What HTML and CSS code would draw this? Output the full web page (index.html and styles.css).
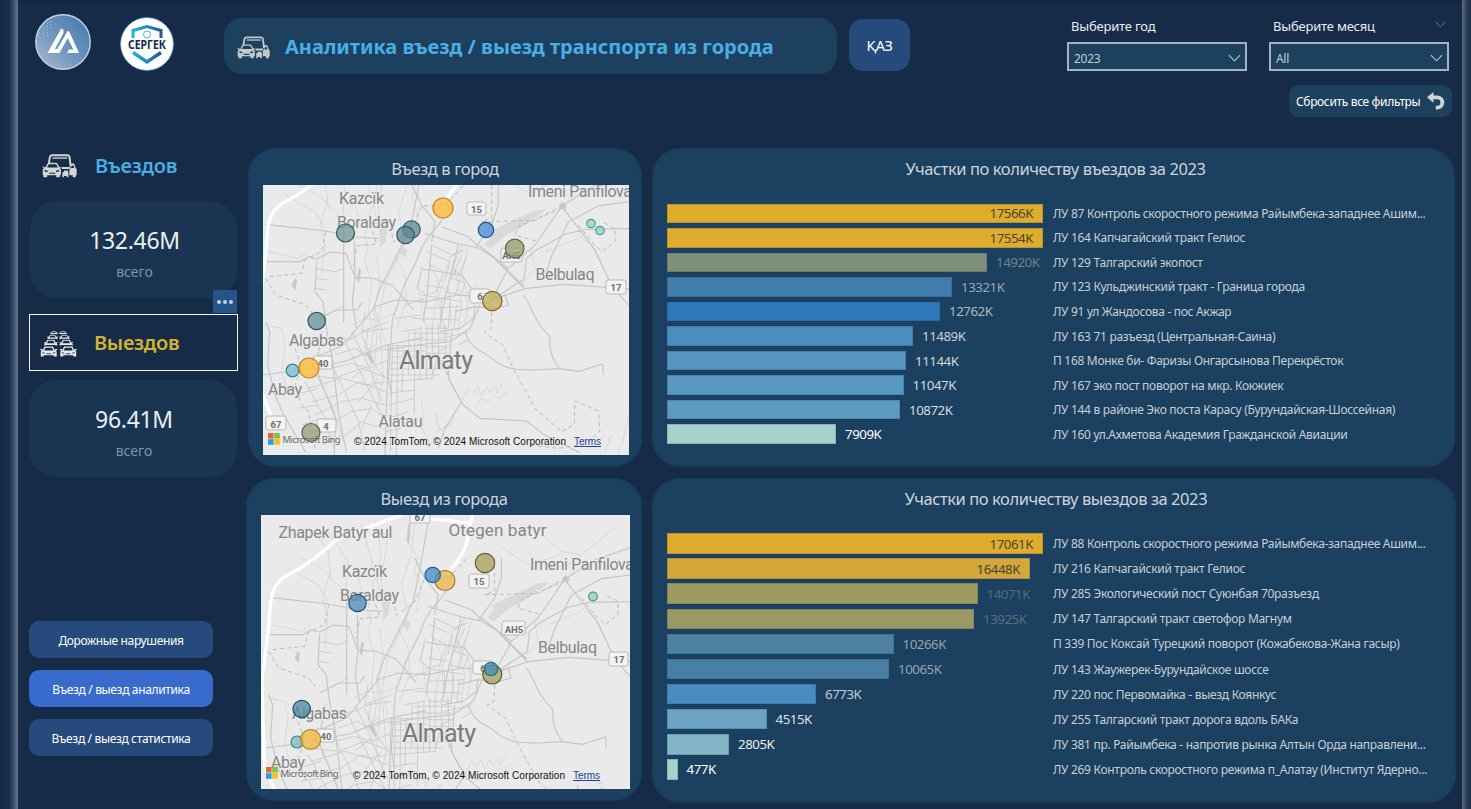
FILE: index.html
```html
<!DOCTYPE html>
<html lang="ru">
<head>
<meta charset="utf-8">
<title>Аналитика въезд / выезд</title>
<link rel="stylesheet" href="styles.css">
</head>
<body>
<svg class="defs" width="0" height="0" aria-hidden="true">
  <defs>
    <symbol id="traffic" viewBox="0 0 34 24">
      <path d="M6.600 9.300 7.600 3.200Q8 1 10 1h14.500q2 0 2.300 2.200L27.800 12M19 13.500h8" fill="none" stroke="currentColor" stroke-width="1.900"/>
      <path d="M10 3.800h14.500" stroke="currentColor" stroke-width="1.300"/>
      <path d="M3.800 13.800 5.600 10q.5-1 1.500-1h6q1 0 1.600 1l1.900 3.800" fill="none" stroke="currentColor" stroke-width="1.400"/>
      <path fill-rule="evenodd" d="M0 12.200h2.400l.4.800h13.900l.4-.8h1.400l-.9 1.500.8 1.500v5.300h-1.200v2h-3.400v-2H5v2H1.500v-2H.7v-5.300l1-1.700zM2.600 15.200v1.600l3 .6v-1.200zm14 0-3 1v1.200l3-.6zM7 18v1.100h5.800V18z" fill="currentColor"/>
      <path fill-rule="evenodd" d="M27 9.200h4.200l1.400 4 1.100 1.500v5.800h-.9v2h-2.900v-2h-3.300v-5.200l1.200-2zM28.300 11v2.500h3L30.500 11z" fill="currentColor"/>
      <path fill-rule="evenodd" d="M19.800 17.500h1l.8-1.700h3.300l.8 1.700v5h-1.500v-1.200h-2.900v1.200h-1.500z" fill="currentColor"/>
    </symbol>
    <symbol id="car-front" viewBox="0 0 17 10">
      <path d="M3.200 4.500 4.800 .8h7.400l1.600 3.700" fill="none" stroke="currentColor" stroke-width="1.300"/>
      <path d="M0 2.600h2.600v1.500H.8zM17 2.600h-2.600v1.500h1.800zM2 4h13l1.200 1.300v4.500h-2.800V8.600H3.600v1.200H.8V5.300z" fill="currentColor"/>
      <path d="M2.200 6.100l2.400.5M14.800 6.100l-2.400.5M6.200 7.200h4.600" stroke="#152b47" stroke-width=".8"/>
    </symbol>
    <symbol id="car-roof" viewBox="0 0 17 8">
      <path d="M3.200 4.700 4.800 .8h7.400l1.600 3.900" fill="none" stroke="currentColor" stroke-width="1.400"/>
      <path d="M0 3h2.800l.4 1.200h10.600l.4-1.200H17l-1.500 1.500.7 1v1.400l-3.400-.7H4.200l-3.400.7V5.500l.7-1z" fill="currentColor"/>
    </symbol>
    <symbol id="chevron" viewBox="0 0 14 8"><path d="M1 1l6 6 6-6" fill="none" stroke="currentColor" stroke-width="1.100"/></symbol>
    <symbol id="mslogo" viewBox="0 0 12 12">
      <path d="M0 0h5.600v5.600H0z" fill="#e8673a"/><path d="M6.200 0h5.600v5.600H6.200z" fill="#82bf3c"/>
      <path d="M0 6.200h5.600v5.600H0z" fill="#1ba2e8"/><path d="M6.200 6.200h5.600v5.600H6.200z" fill="#fbbc1b"/>
    </symbol>
    <g id="basemap" fill="none" stroke-linejoin="round">
      <g fill="#d9d9d9">
        <path d="M730 262 870 196l35-2-70 50-55 28-42 38-20-10 22-25zM405 245l22 5-5 40-18 18zM460 320l14-16 14 12-8 22z"/>
      </g>
      <g fill="#c9c9c9">
        <path d="M360 625l14-8 12 30-4 12zM340 370l8 5-6 40-6-10zM480 20l8-10-4 70-8-8zM148 400l8 5-4 30-12-12zM943 178l12-6 10 12-8 14z"/>
      </g>
      <g stroke="#d6d6d6" stroke-width="2.800">
        <path d="M160 120l60 30 60 60 20 60M240 40l60 90-8 100M340 20l30 100 10 60-20 90M420 60l-20 120 5 90M250 150l-25 90 15 60-10 90M190 30l50 70 10 90M500 10l-10 100-30 90 20 90-60 130M470 60l40 60-10 40 20 50-15 70M120 150l90 50 30 50M380 10l20 90-15 80 20 80"/>
        <path d="M355 270l15 30-10 50 20 60-10 90 15 60-10 60M395 330l10 80-15 70 10 80M420 420l-20 100 20 70M330 180l20 70M450 330l30 60 5 80-30 80M60 540l50 10 10 50M70 320l90 20 30-20M540 540l-20-120 10-60M560 560l20-150-30-60M600 560l-20-100 30-110M620 540l-10-120 30-100M640 560l10-90-25-110 25-60M660 540l10-80-20-80 20-70"/>
        <path d="M300 480l-60 30M320 540l40-20 40 5 50-20M120 600l-10 80 20 60M1000 270l40 30 30 60M700 420l-40 30 10 40M900 320l100-40M1100 30l-150 120M860 30l80 70 60 10M860 310l10 60-40 50M750 80l90 60 100-30M480 840l50 10 30 50M600 870l-30-40 10-30M530 760l5 80M405 560l10 140-20 90M385 480l10 100-10 130"/>
        <path d="M650 770l20-40 18 14 10-20 12 28 16-28 8 18 18-20 4 22 16-30M690 790l20-30 20 10 20-20 10 12 30-24M570 800l14 50-8 8 40-20 14-24M1155 800l-22 90-15 35M1100 870l-20 50"/>
      </g>
      <g stroke="#c5c5c5" stroke-width="3.400">
        <path d="M62 238l180 20 90 18 70 4M65 350h100l25-15 25 8 40-22 48 4 27 72 52 2 62 24 60 70M296 240v290M328 290l2 108-8 72 12 80M54 690l90-12 160-30 120-48 110-22M215 525l60-30 60 0 15-22M62 530l12 30-6 100 22 90 22 52 70 120M215 350l-5 90 24 30 12 90 16 80 18 160 24 120M232 560l-20 110 60 150-4 110"/>
        <path d="M541 10l-25 140-20 100-90 180-20 60-90 110-96 42M596 215c-20 40-60 60-80 130l-40 80-34 100-12 170 10 60M500 120l30 60 40 50-10 60M540 265l60 20 42 12 60 12 46 30 88 84M700 305l-30-30-80-30M690 310l50-70 20-60 0-60M640 298l-40 160-15 80M560 300l-16 170-10 60"/>
        <path d="M740 465l50-95 80-70 80-116 90-58 115-40M740 465l98-64 6-60 30-26 88-48 60-14 133-2M740 465l100-34 120-13 195 14M838 431l-85-86M950 184l100 130 50 110 56 62M1155 170l-95 12-90 50-50 100-15 46M740 465l-40-10-60-5-100 20-90-5-60 20M790 370l-90-70M740 465l40-15 10 30-40 10-60-5-60 15M690 480l-5 40-40 30-60 10"/>
        <path d="M835 450c25 30 30 80 80 125-6 45 12 75 28 96l60 8 70-22 2 32M660 560c20 60 60 60 80 80 40 35 80 35 130 35l73-4M590 640l30 80 35 60 50 40 140 8 50 40 110 55M620 560l-10 140 40 70-50 80-20 60M705 480l-30 70-60 40-100 10-95 15M680 430l-30-40-120-18M430 600l-10 330"/>
      </g>
      <g stroke="#c9c9c9" stroke-width="2.700">
        <path d="M440 602h100M440 618h100M438 636h130M436 654h110M434 672h180M434 690h150M442 600l-6 320M458 600l-4 330M475 600l-4 140M492 560l-2 130M510 555l-2 250M528 545l-2 160M545 540v160M562 540v150M580 540l2 110M600 540l4 150M500 565h110M500 585h110M540 550h70M540 605h70M540 625h70M434 710l130-10M430 745l80-10M430 780l80-20M430 820l60-20M420 860l50-10M410 900l50-5"/>
        <path d="M270 630l60-20 30 20 60-20M260 670l60-15 50 15 60-25M180 690l90 10 80-30 80 30M190 730l100-30 70 20 60-10M200 770l80-20 60-40 80 30M210 810l80-40 60-10 70 20M230 850l90-50 60-10 40 30M290 880l60-50 60 20M290 570l50 100 60 120 30 60M320 560l50 100 40 110M350 570l40 90 30 40M250 640l50 100 40 90 20 90M220 700l40 80 40 120M180 710l60 110 30 100M370 550l-10 60M300 590l60-30 70-10M330 640l60-40M360 500l-10 60 80-30M320 700l50-40M380 780l-30 70M400 700l-60 70M150 750l70-20M160 790l60-10M170 840l60-20M230 900l60-30M340 900l60-30M250 600l60-20"/>
        <path d="M530 380l-15 50 30 20 30-10 20-60-40-20M560 300l60 30 40-15M545 320l70 30-15 60M620 370l30 20-20 60M610 340l40-25M650 330l-30 70M665 335l-30 70M620 400l40 15-10 30M540 420l60 10M530 450l120 20M540 490l110-5M500 520l140 5M470 560l60-10M600 440l50 10M210 370l60 10 30-10M210 400l40 5M208 430l35 5M560 700l20-80 40-20M590 580l80-20M640 600l30-15M570 660l50-10M480 480l60-20M450 520l80-10M590 460l-5 90M615 470l-5 80M635 480l-8 70"/>
      </g>
      <g stroke="#b5b5b5" stroke-width="2.700" stroke-dasharray="13 9">
        <path d="M655 122l-55 60-70 0-30 70-55 40-10-60-60 5 20 60-60 5-10 60M242 260l-12 60-50 25-10 40-100 10M62 400l30 50 90 30 20 25M740 120v100l-30 10 160-4 80-44M950 190l-130 55-10 25 70 20M740 500l-2 50-20 12 55 38 32 70 65 120 80 70 38-22 2-70 70 30 5 60-45 40-80 12-90-10M1000 240l40 50 30 30 40-30 0-40-40-20M150 610l20 60-20 50 20 60 20 20 20 110"/>
      </g>
      <path d="M461-9 271 61c-40 35-90 80-160 115-40 25-45 65-48 145L41 491l8 249 32 80M541 1l130 15M673-9l-12 60c-8 60-45 90-65 120" stroke="#fff" stroke-width="10"/>
    </g>
    <linearGradient id="sky" x1="1" y1="0" x2="0" y2="1"><stop offset="0" stop-color="#3f74ab"/><stop offset=".55" stop-color="#7398bd"/><stop offset="1" stop-color="#a6bdd4"/></linearGradient>
    <linearGradient id="shield" x1="0" x2="1"><stop offset="0" stop-color="#1fb5dc"/><stop offset="1" stop-color="#1e5c9c"/></linearGradient>
  </defs>
</svg>

<div class="app">
  <div class="rail rail-left"></div>
  <main class="page">
    <header class="top">
      <svg class="logo-a" viewBox="0 0 56 56">
        <circle cx="28" cy="28" r="27.200" fill="url(#sky)" stroke="#c3d0e2" stroke-width="1.400"/>
        <path d="M4.500 22v-6M8.500 23v-12M12.500 22V8M16 14V6" stroke="#a9c2dc" stroke-width="1" stroke-dasharray="1 2"/>
        <path d="M12.500 39 26.200 14.500l2.300 1.300v3.200L19.800 35h2.600l10-17.800h1.700L44 39H32.200l1.600-3.500h4.600l-5.700-11.300L24.400 39z" fill="#fff"/>
      </svg>
      <svg class="logo-s" viewBox="0 0 54 54">
        <circle cx="27" cy="27" r="26.300" fill="#fff" stroke="#8cc4e4" stroke-width=".8"/>
        <path d="M13 21V13.500L27 9.500l14 4V21" fill="none" stroke="url(#shield)" stroke-width="3"/>
        <circle cx="27" cy="17.500" r="3.500" fill="none" stroke="#3ca5cd" stroke-width=".9"/>
        <path d="M13 35.500 27 45l14-9.500" fill="none" stroke="url(#shield)" stroke-width="3.400"/>
        <text x="27" y="31.500" text-anchor="middle" class="sergek" textLength="38" lengthAdjust="spacingAndGlyphs">СЕРГЕК</text>
      </svg>
      <div class="title-bar">
        <svg class="icon-title"><use href="#traffic"/></svg>
        <h1>Аналитика въезд / выезд транспорта из города</h1>
      </div>
      <button class="lang">ҚАЗ</button>
      <div class="filters">
        <div class="selects">
          <div class="field"><span class="field-label">Выберите год</span><div class="select"><span>2023</span><svg><use href="#chevron"/></svg></div></div>
          <div class="field"><span class="field-label">Выберите месяц<svg><use href="#chevron"/></svg></span><div class="select"><span>All</span><svg><use href="#chevron"/></svg></div></div>
        </div>
        <button class="reset"><span>Сбросить все фильтры</span>
          <svg viewBox="0 0 18 18"><path d="M6.500 0v3.400h3.700a6.900 6.900 0 0 1 0 14.200H8.800v-3.800h1.300a3.300 3.300 0 0 0 0-6.600H6.500v3.600L0 5.300z" fill="currentColor"/></svg>
        </button>
      </div>
    </header>

    <div class="content">
      <aside class="side">
        <div class="kpi-head in"><svg class="kpi-icon"><use href="#traffic"/></svg><span>Въездов</span></div>
        <div class="kpi"><b>132.46M</b><span>всего</span></div>
        <div class="kpi-head out">
          <svg class="jam" viewBox="0 0 37 26">
            <use href="#car-roof" x="10" y="0" width="8" height="4"/><use href="#car-roof" x="19" y="0" width="8" height="4"/>
            <use href="#car-roof" x="7" y="3.500" width="11" height="5.500"/><use href="#car-roof" x="19" y="3.500" width="11" height="5.500"/>
            <use href="#car-roof" x="3.500" y="8.500" width="14.500" height="7"/><use href="#car-roof" x="19" y="8.500" width="14.500" height="7"/>
            <use href="#car-front" x="0" y="15" width="17.500" height="11"/><use href="#car-front" x="19.500" y="15" width="17.500" height="11"/>
          </svg>
          <span>Выездов</span>
          <i class="more"><i></i><i></i><i></i></i>
        </div>
        <div class="kpi second"><b>96.41M</b><span>всего</span></div>
        <nav class="nav">
          <a>Дорожные нарушения</a>
          <a class="active">Въезд / выезд аналитика</a>
          <a>Въезд / выезд статистика</a>
        </nav>
      </aside>

      <section class="panel map-panel">
        <h2>Въезд в город</h2>
        <svg class="map" width="366" height="270">
          <use href="#basemap" transform="translate(-18 -40) scale(.33333)"/>
          <g class="shields">
            <rect x="204" y="17" width="19" height="13"/><text x="213.500" y="28">15</text>
            <rect x="238" y="63" width="21" height="14"/><text x="248.500" y="74">AH5</text>
            <rect x="343" y="95" width="20" height="14"/><text x="353" y="106">17</text>
            <rect x="207" y="104" width="20" height="14"/><text x="217" y="115">6</text>
            <rect x="50" y="171" width="19" height="13"/><text x="60" y="182">40</text>
            <rect x="3" y="231" width="20" height="14"/><text x="13" y="243">67</text>
            <rect x="54" y="234" width="19" height="13"/><text x="63" y="245">4</text>
          </g>
          <g class="places">
            <text x="76" y="18.500" textLength="45">Kazcïk</text>
            <text x="74" y="43" textLength="59">Boralday</text>
            <text x="265" y="12" textLength="104">Imeni Panfilova</text>
            <text x="272.500" y="95" textLength="59">Belbulaq</text>
            <text x="26" y="160.500" textLength="55">Algabas</text>
            <text x="5" y="210" textLength="34">Abay</text>
            <text x="115.500" y="242" textLength="44">Alatau</text>
            <text class="city" x="136" y="183.500" textLength="74">Almaty</text>
          </g>
          <g class="dots">
            <circle cx="180" cy="23" r="10" fill="#fcb72c" stroke="#c4831c"/>
            <circle cx="148.500" cy="44.500" r="8.700" fill="#5b8a90" stroke="#2f5965"/>
            <circle cx="142.500" cy="50" r="8.700" fill="#5b8a90" stroke="#2f5965"/>
            <circle cx="82.500" cy="48" r="9" fill="#6f9694" stroke="#31555a"/>
            <circle cx="223" cy="45" r="7.700" fill="#3f8bcf" stroke="#18529b"/>
            <circle cx="251.700" cy="63.500" r="9.300" fill="#929d68" stroke="#5c643d"/>
            <circle cx="328" cy="38.500" r="4.200" fill="#8dd6cb" stroke="#4a9f98"/>
            <circle cx="337" cy="45.500" r="4.200" fill="#8dd6cb" stroke="#4a9f98"/>
            <circle cx="229.300" cy="116" r="9.700" fill="#c0aa58" stroke="#7e6b25"/>
            <circle cx="53.700" cy="136" r="8.700" fill="#618f98" stroke="#2b5661"/>
            <circle cx="29.500" cy="185.500" r="6.300" fill="#70c0d0" stroke="#38818f"/>
            <circle cx="46" cy="183" r="10" fill="#fcb72c" stroke="#c4831c"/>
            <circle cx="48" cy="247.500" r="9" fill="#929d78" stroke="#59613d"/>
          </g>
          <use href="#mslogo" x="5" y="248" width="12" height="12"/>
          <text class="bing" x="19.500" y="257.500" textLength="58">Microsoft Bing</text>
          <text class="copy" x="91" y="260" textLength="212">© 2024 TomTom, © 2024 Microsoft Corporation</text>
          <text class="copy terms" x="311" y="260" textLength="27">Terms</text>
        </svg>
      </section>

      <section class="panel chart-panel">
        <h2>Участки по количеству въездов за 2023</h2>
        <div class="chart upper">
          <div class="row"><div class="track"><i class="bar" style="width:376px;background:#e0ac2c"></i><em class="inside">17566K</em></div><span>ЛУ 87 Контроль скоростного режима Райымбека-западнее Ашим...</span></div>
          <div class="row"><div class="track"><i class="bar" style="width:376px;background:#e0ac2c"></i><em class="inside">17554K</em></div><span>ЛУ 164 Капчагайский тракт Гелиос</span></div>
          <div class="row"><div class="track"><i class="bar" style="width:320px;background:#7e9079"></i><em style="color:#70808c">14920K</em></div><span>ЛУ 129 Талгарский экопост</span></div>
          <div class="row"><div class="track"><i class="bar" style="width:285px;background:#417dab"></i><em style="color:#9aa7b2">13321K</em></div><span>ЛУ 123 Кульджинский тракт - Граница города</span></div>
          <div class="row"><div class="track"><i class="bar" style="width:273px;background:#2d77bb"></i><em style="color:#adb8c1">12762K</em></div><span>ЛУ 91 ул Жандосова - пос Акжар</span></div>
          <div class="row"><div class="track"><i class="bar" style="width:246px;background:#4a8ebf"></i><em style="color:#c9d1d8">11489K</em></div><span>ЛУ 163 71 разъезд (Центральная-Саина)</span></div>
          <div class="row"><div class="track"><i class="bar" style="width:239px;background:#5595c0"></i><em style="color:#d1d8de">11144K</em></div><span>П 168 Монке би- Фаризы Онгарсынова Перекрёсток</span></div>
          <div class="row"><div class="track"><i class="bar" style="width:236.500px;background:#5797c1"></i><em style="color:#d3dadf">11047K</em></div><span>ЛУ 167 эко пост поворот на мкр. Кокжиек</span></div>
          <div class="row"><div class="track"><i class="bar" style="width:233px;background:#5c9ac1"></i><em style="color:#d7dde2">10872K</em></div><span>ЛУ 144 в районе Эко поста Карасу (Бурундайская-Шоссейная)</span></div>
          <div class="row"><div class="track"><i class="bar" style="width:169px;background:#a5d3cc"></i><em style="color:#fff">7909K</em></div><span>ЛУ 160 ул.Ахметова Академия Гражданской Авиации</span></div>
        </div>
      </section>

      <section class="panel map-panel low">
        <h2>Выезд из города</h2>
        <svg class="map" width="369" height="274">
          <use href="#basemap" transform="translate(-13 3) scale(.33333)"/>
          <g class="shields">
            <rect x="149" y="-5" width="20" height="13"/><text x="159" y="6">67</text>
            <rect x="208" y="59" width="20" height="14"/><text x="218" y="70">15</text>
            <rect x="241" y="106" width="23" height="14"/><text x="253" y="117.500">AH5</text>
            <rect x="348" y="137" width="19" height="14"/><text x="358" y="148">17</text>
            <rect x="212" y="146" width="20" height="13"/><text x="222" y="157">6</text>
            <rect x="55" y="214" width="18" height="13"/><text x="65" y="225">40</text>
          </g>
          <g class="places">
            <text x="17.500" y="23" textLength="114">Zhapek Batyr aul</text>
            <text class="wide" x="187.500" y="20.500" textLength="98">Otegen batyr</text>
            <text x="81" y="61.500" textLength="45">Kazcïk</text>
            <text x="79" y="86" textLength="59">Boralday</text>
            <text x="269" y="54.500" textLength="104">Imeni Panfilova</text>
            <text x="277" y="138" textLength="59">Belbulaq</text>
            <text x="31" y="203.500" textLength="55">Algabas</text>
            <text x="10" y="253" textLength="34">Abay</text>
            <text class="city" x="141" y="226.500" textLength="74">Almaty</text>
          </g>
          <g class="dots">
            <circle cx="184" cy="65.500" r="10" fill="#ebb243" stroke="#a77c25"/>
            <circle cx="171.700" cy="60" r="7.700" fill="#3e8bca" stroke="#22588d"/>
            <circle cx="224" cy="48" r="9.700" fill="#a59e55" stroke="#666031"/>
            <circle cx="96.500" cy="88" r="8.700" fill="#4b86ae" stroke="#1f5584"/>
            <circle cx="332" cy="81.500" r="4.300" fill="#8dd0c3" stroke="#4e8f86"/>
            <circle cx="231.300" cy="159.500" r="9.500" fill="#a59e60" stroke="#5e5b31"/>
            <circle cx="230" cy="154" r="6.700" fill="#3f91b2" stroke="#286b87"/>
            <circle cx="40.700" cy="194" r="8.700" fill="#4d85a0" stroke="#1e5067"/>
            <circle cx="36" cy="227" r="6" fill="#7abac1" stroke="#3d8792"/>
            <circle cx="49.700" cy="224.500" r="10" fill="#f0b537" stroke="#b58527"/>
          </g>
          <use href="#mslogo" x="5" y="252" width="12" height="12"/>
          <text class="bing" x="19.500" y="261.500" textLength="58">Microsoft Bing</text>
          <text class="copy" x="92" y="264" textLength="212">© 2024 TomTom, © 2024 Microsoft Corporation</text>
          <text class="copy terms" x="312" y="264" textLength="27">Terms</text>
        </svg>
      </section>

      <section class="panel chart-panel low">
        <h2>Участки по количеству выездов за 2023</h2>
        <div class="chart lower">
          <div class="row"><div class="track"><i class="bar" style="width:376px;background:#e0ac2c"></i><em class="inside">17061K</em></div><span>ЛУ 88 Контроль скоростного режима Райымбека-западнее Ашим...</span></div>
          <div class="row"><div class="track"><i class="bar" style="width:363px;background:#d3a739"></i><em class="inside">16448K</em></div><span>ЛУ 216 Капчагайский тракт Гелиос</span></div>
          <div class="row"><div class="track"><i class="bar" style="width:310.500px;background:#9f9a62"></i><em style="color:#566b7c">14071K</em></div><span>ЛУ 285 Экологический пост Суюнбая 70разъезд</span></div>
          <div class="row"><div class="track"><i class="bar" style="width:307px;background:#9c9863"></i><em style="color:#596e7f">13925K</em></div><span>ЛУ 147 Талгарский тракт светофор Магнум</span></div>
          <div class="row"><div class="track"><i class="bar" style="width:226.500px;background:#4d81a2"></i><em style="color:#95a3b0">10266K</em></div><span>П 339 Пос Коксай Турецкий поворот (Кожабекова-Жана гасыр)</span></div>
          <div class="row"><div class="track"><i class="bar" style="width:222px;background:#497fa4"></i><em style="color:#98a6b2">10065K</em></div><span>ЛУ 143 Жаужерек-Бурундайское шоссе</span></div>
          <div class="row"><div class="track"><i class="bar" style="width:149px;background:#498dbf"></i><em style="color:#c3ccd4">6773K</em></div><span>ЛУ 220 пос Первомайка - выезд Коянкус</span></div>
          <div class="row"><div class="track"><i class="bar" style="width:99.500px;background:#6ba4c3"></i><em style="color:#dce2e6">4515K</em></div><span>ЛУ 255 Талгарский тракт дорога вдоль БАКа</span></div>
          <div class="row"><div class="track"><i class="bar" style="width:62px;background:#83b6c6"></i><em style="color:#ebeff1">2805K</em></div><span>ЛУ 381 пр. Райымбека - напротив рынка Алтын Орда направлени...</span></div>
          <div class="row"><div class="track"><i class="bar" style="width:10.500px;background:#a5d3cc"></i><em style="color:#fff">477K</em></div><span>ЛУ 269 Контроль скоростного режима п_Алатау (Институт Ядерно...</span></div>
        </div>
      </section>
    </div>
  </main>
  <div class="rail rail-right"></div>
</div>
</body>
</html>
```
FILE: styles.css
```css
* { box-sizing: border-box; margin: 0; padding: 0; }
body {
  width: 1471px; height: 809px; overflow: hidden;
  background: #152b47; color: #e8edf2;
  font-family: "Noto Sans", "Open Sans", sans-serif;
}
.defs { position: absolute; }
.app { display: flex; width: 1471px; height: 809px; background: linear-gradient(#12243d, #152b47 5px); }
.rail-left { width: 18px; background: linear-gradient(90deg, #14294a 0, #182d4b 9px, #37496a 13px, #66758c 18px); }
.rail-right { width: 9px; background: linear-gradient(90deg, #5f6d82, #33435e 4px, #182c4a 9px); }
.page { width: 1444px; height: 809px; }

.top { display: flex; align-items: flex-start; height: 148px; padding-left: 17px; }
.logo-a { width: 56px; height: 56px; margin-top: 14px; }
.logo-s { width: 54px; height: 54px; margin: 17px 0 0 29px; }
.sergek { font: 700 11.5px "Noto Sans", sans-serif; fill: #16294f; }
.title-bar {
  display: flex; align-items: center; width: 613px; height: 56px; margin: 18px 0 0 50px; padding-left: 13px;
  border-radius: 18px; background: #1c405e;
}
.icon-title { width: 33px; height: 24px; margin-top: 4px; color: #c4c8ca; }
h1 { margin: 0 0 0 15px; font-size: 20px; font-weight: 700; color: #4aaee3; white-space: nowrap; }
button { border: 0; color: #fff; font-family: inherit; }
.lang { width: 61px; height: 52px; margin: 19px 0 0 12px; border-radius: 14px; background: #254a7b; font-size: 14.5px; letter-spacing: -.5px; }
.filters { display: flex; flex-direction: column; align-items: flex-end; gap: 14px; margin: 17px 0 0 157px; }
.selects { display: flex; gap: 22px; }
.field { width: 180px; }
.field-label { display: flex; justify-content: space-between; height: 25px; padding: 0 3px 0 4px; font-size: 13px; line-height: 19px; letter-spacing: -.2px; }
.field-label svg { width: 11px; height: 7px; margin-top: 4px; color: #7c8da1; }
.select {
  display: flex; align-items: center; justify-content: space-between; height: 29px; padding: 3px 4px 0 5px;
  border: 2px solid #a3b3c0; background: #1c405e; font-size: 12px; color: #c2cdd6; letter-spacing: -.3px;
}
.select svg { width: 13px; height: 8px; margin-top: -1px; color: #c2cdd6; }
.reset {
  display: flex; align-items: center; justify-content: space-between; width: 163px; height: 32px; margin-right: -3px; padding: 0 7px;
  border-radius: 9px; background: #1c405e; font-size: 12px; letter-spacing: -.35px; white-space: nowrap;
}
.reset svg { width: 18px; height: 18px; color: #d0d4d8; }

.content {
  display: grid; grid-template-columns: 212px 395px 804px; grid-template-rows: 319px 325px; row-gap: 11px;
  padding-left: 11px;
}
.side { grid-row: 1 / 3; width: 212px; padding-top: 1px; }
.kpi-head { display: flex; align-items: center; font-size: 20px; font-weight: 600; letter-spacing: -.3px; }
.kpi-head.in { height: 31px; margin-bottom: 21px; padding-left: 13px; color: #4aaee3; }
.kpi-head.in span { margin-top: 1px; }
.kpi-icon { width: 35px; height: 25px; margin: 4px 18px 0 0; color: #d5d6d6; }
.kpi {
  display: flex; flex-direction: column; align-items: center; width: 207px; height: 97px; margin: 0 0 0 1px; padding: 22px 0 0 2px;
  border-radius: 27px; background: #193552;
}
.kpi.second { width: 208px; margin: 9px 0 0; }
.kpi b { font-size: 23px; font-weight: 400; line-height: 34px; letter-spacing: -.3px; color: #eaf0f5; }
.kpi span { margin-top: 5px; font-size: 14px; line-height: 20px; color: #8393a2; }
.kpi-head.out { position: relative; width: 209px; height: 57px; margin-top: 16px; padding-left: 11px; border: 1px solid #f0f3f6; color: #d2b433; }
.jam { width: 37px; height: 26px; margin: 2px 17px 0 -1px; color: #e8eaec; }
.more { position: absolute; right: 0; top: -25px; display: flex; align-items: center; justify-content: center; gap: 2px; width: 24px; height: 23px; background: #265388; }
.more i { width: 4px; height: 4px; border-radius: 50%; background: #c4d4e8; }
.nav { display: flex; flex-direction: column; gap: 12px; width: 184px; margin-top: 144px; }
.nav a { height: 37px; border-radius: 10px; background: #254a7b; color: #fff; font-size: 12px; line-height: 40px; text-align: center; letter-spacing: -.35px; }
.nav a.active { background: #386bcb; }

.panel { border-radius: 28px; background: #1c405f; box-shadow: inset 0 0 1px 1px #1a3a58; }
h2 { height: 37px; font-size: 16.5px; font-weight: 400; line-height: 42px; text-align: center; color: #ccd4db; white-space: nowrap; letter-spacing: -.4px; }
.map-panel { width: 394px; margin-left: 7px; padding: 0 15px; }
.map-panel.low { width: 396px; height: 323px; margin-left: 5px; }
.chart-panel { width: 803px; margin-left: 16px; padding: 0 0 0 15px; }
.chart-panel.low { width: 804px; }
.chart-panel h2 { padding-right: 11px; letter-spacing: -.43px; }
.map { display: block; background: #eaeaea; overflow: hidden; }
.places text { font: 16px Roboto, sans-serif; fill: #868686; stroke: #eaeaea; stroke-width: 2px; paint-order: stroke; }
.places .wide { font-size: 17px; }
.places .city { font-size: 25px; fill: #7a7a7a; }
.shields rect { fill: #f3f3f3; stroke: #b9b9b9; stroke-width: 1; rx: 2px; }
.shields text { font: 700 9.5px Roboto, sans-serif; fill: #6e6e6e; text-anchor: middle; }
.dots circle { fill-opacity: .74; stroke-width: 1.2px; }
.bing { font: 9.5px "Noto Sans", sans-serif; fill: #6a6a6a; }
.copy { font: 10px "Liberation Sans", sans-serif; fill: #111; }
.terms { fill: #1f3f95; text-decoration: underline; }

.chart { display: grid; padding-top: 17px; }
.upper { grid-auto-rows: 24.55px; margin-top: -1px; }
.lower { grid-auto-rows: 25.1px; margin-top: -1px; }
.row { display: grid; grid-template-columns: 376px 1fr; column-gap: 10px; align-items: center; }
.track { display: flex; align-items: center; position: relative; height: 100%; }
.bar { height: 19.5px; box-shadow: inset 0 0 0 1px rgba(28, 64, 95, .22); flex: none; }
.lower .bar { height: 20.5px; }
.track em { margin-left: 9px; font-size: 13.3px; font-style: normal; letter-spacing: -.45px; }
.track .inside { margin-left: -53.5px; color: #4a4430; }
.row > span { font-size: 12px; color: #c6cfd7; letter-spacing: -.3px; white-space: nowrap; }
```
